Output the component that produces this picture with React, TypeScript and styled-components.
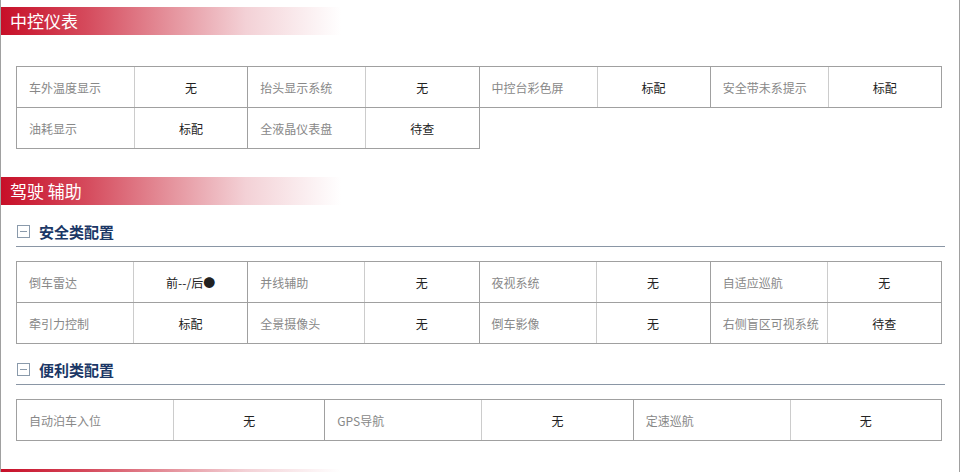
import styled, { createGlobalStyle } from 'styled-components';

type Item = [string, string];

const dashboard: Item[] = [
  ['车外温度显示', '无'],
  ['抬头显示系统', '无'],
  ['中控台彩色屏', '标配'],
  ['安全带未系提示', '标配'],
  ['油耗显示', '标配'],
  ['全液晶仪表盘', '待查'],
];

const safety: Item[] = [
  ['倒车雷达', '前--/后●'],
  ['并线辅助', '无'],
  ['夜视系统', '无'],
  ['自适应巡航', '无'],
  ['牵引力控制', '标配'],
  ['全景摄像头', '无'],
  ['倒车影像', '无'],
  ['右侧盲区可视系统', '待查'],
];

const convenience: Item[] = [
  ['自动泊车入位', '无'],
  ['GPS导航', '无'],
  ['定速巡航', '无'],
];

function SpecTable({ items, cols, labelWidth }: { items: Item[]; cols: number; labelWidth: number }) {
  return (
    <Grid $cols={cols}>
      {items.map(([label, value]) => (
        <Pair key={label}>
          <Label $w={labelWidth}>{label}</Label>
          <Value>{value}</Value>
        </Pair>
      ))}
    </Grid>
  );
}

function SubTitle({ children }: { children: string }) {
  return (
    <SubHeader>
      <Toggle />
      <SubText>{children}</SubText>
    </SubHeader>
  );
}

export default function App(): JSX.Element {
  return (
    <>
      <GlobalStyle />
      <Page>
        <Section>
          <SectionBar>中控仪表</SectionBar>
          <Body $top={31}>
            <SpecTable items={dashboard} cols={4} labelWidth={118} />
          </Body>
        </Section>
        <Section>
          <SectionBar>驾驶 辅助</SectionBar>
          <Body $top={1}>
            <SubTitle>安全类配置</SubTitle>
            <TableWrap>
              <SpecTable items={safety} cols={4} labelWidth={117} />
            </TableWrap>
            <SubTitle>便利类配置</SubTitle>
            <TableWrap>
              <SpecTable items={convenience} cols={3} labelWidth={157} />
            </TableWrap>
          </Body>
        </Section>
        <Section>
          {/* next section bar, only its top edge is in view */}
          <SectionBar aria-hidden />
        </Section>
      </Page>
    </>
  );
}

const GlobalStyle = createGlobalStyle`
  html, body {
    margin: 0;
    padding: 0;
    background: #fff;
    font-family: "Noto Sans CJK SC", "Liberation Sans", sans-serif;
  }
`;

const Page = styled.div`
  width: 958px;
  border-left: 1px solid #a0a0a0;
  border-right: 1px solid #a0a0a0;
  padding-top: 7px;
  padding-bottom: 40px;
`;

const Section = styled.section`
  margin-bottom: 28px;
`;

const SectionBar = styled.h2`
  margin: 0;
  width: 340px;
  height: 28px;
  line-height: 28px;
  padding-left: 9px;
  box-sizing: border-box;
  font-size: 17px;
  font-weight: normal;
  color: #fff;
  background: linear-gradient(to right, #c70f28 0%, #d54a5c 25%, #e5939d 50%, #f3d1d6 72%, #ffffff 100%);
`;

const Body = styled.div<{ $top: number }>`
  padding: ${(p) => p.$top}px 16px 0 15px;
`;

const SubHeader = styled.div`
  height: 41px;
  display: flex;
  align-items: flex-end;
  gap: 9px;
  padding: 0 0 6px 1px;
  box-sizing: border-box;
  border-bottom: 1px solid #8a96a5;
  margin-right: -2px;
`;

const Toggle = styled.span`
  position: relative;
  width: 11px;
  height: 11px;
  border: 1px solid #8a9aab;
  margin-bottom: 2px;
  &::after {
    content: '';
    position: absolute;
    left: 2px;
    right: 2px;
    top: 5px;
    height: 1px;
    background: #8a9aab;
  }
`;

const SubText = styled.span`
  font-size: 15px;
  line-height: 16px;
  font-weight: bold;
  color: #1b3766;
`;

const TableWrap = styled.div`
  margin-top: 14px;
`;

const Grid = styled.div<{ $cols: number }>`
  display: grid;
  grid-template-columns: repeat(${(p) => p.$cols}, 1fr);
  width: 925px;
  border-top: 1px solid #a0a0a0;
  border-left: 1px solid #a0a0a0;
`;

const Pair = styled.div`
  display: flex;
  height: 40px;
  border-right: 1px solid #a0a0a0;
  border-bottom: 1px solid #a0a0a0;
`;

const Label = styled.div<{ $w: number }>`
  width: ${(p) => p.$w}px;
  flex: none;
  box-sizing: border-box;
  padding-left: 12px;
  border-right: 1px solid #cccccc;
  display: flex;
  align-items: center;
  font-size: 12px;
  color: #888;
  white-space: nowrap;
`;

const Value = styled.div`
  flex: 1;
  display: flex;
  align-items: center;
  justify-content: center;
  font-size: 12px;
  color: #222;
`;
